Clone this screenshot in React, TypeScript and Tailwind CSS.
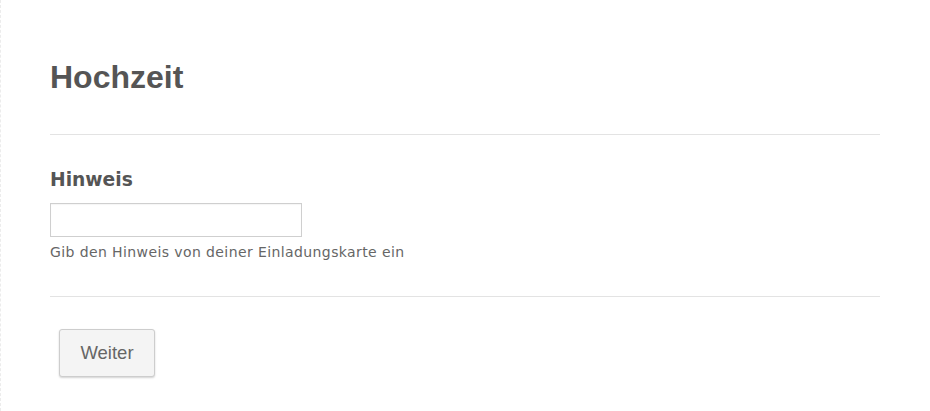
import React from 'react';

// Single-step form: invitation hint entry
const App: React.FC = () => {
  return (
    <div className="min-h-screen bg-white border-l border-dashed border-[#ececec] pt-[57px]">
      <div className="pl-[49px] pr-[50px]">
        <h1 className="text-[32px] leading-[40px] font-bold text-[#555] font-['Liberation_Sans',Arial,sans-serif]">
          Hochzeit
        </h1>
        <hr className="mt-[37px] border-0 border-t border-[#e3e3e3]" />

        <div className="font-['DejaVu_Sans',Verdana,sans-serif]">
          <label htmlFor="hint" className="block mt-[34px] text-[18.7px] leading-[22px] font-bold text-[#555]">
            Hinweis
          </label>
          <input
            id="hint"
            type="text"
            className="block mt-[12px] w-[252px] h-[34px] border border-[#cfcfcf] bg-white px-2 text-sm outline-none shadow-[inset_0_1px_1px_rgba(0,0,0,0.04)]"
          />
          <p className="mt-[7px] text-[14px] leading-[16px] tracking-[0.4px] text-[#666]">
            Gib den Hinweis von deiner Einladungskarte ein
          </p>
        </div>

        <hr className="mt-[36px] border-0 border-t border-[#e3e3e3]" />

        <button className="mt-[32px] ml-[9px] w-[96px] h-[48px] rounded-[3px] border border-[#cdcdcd] bg-[#f4f4f4] text-[18.5px] text-[#666] font-['Liberation_Sans',Arial,sans-serif] shadow-[0_1px_2px_rgba(0,0,0,0.18)]">
          Weiter
        </button>
      </div>
    </div>
  );
};

export default App;
